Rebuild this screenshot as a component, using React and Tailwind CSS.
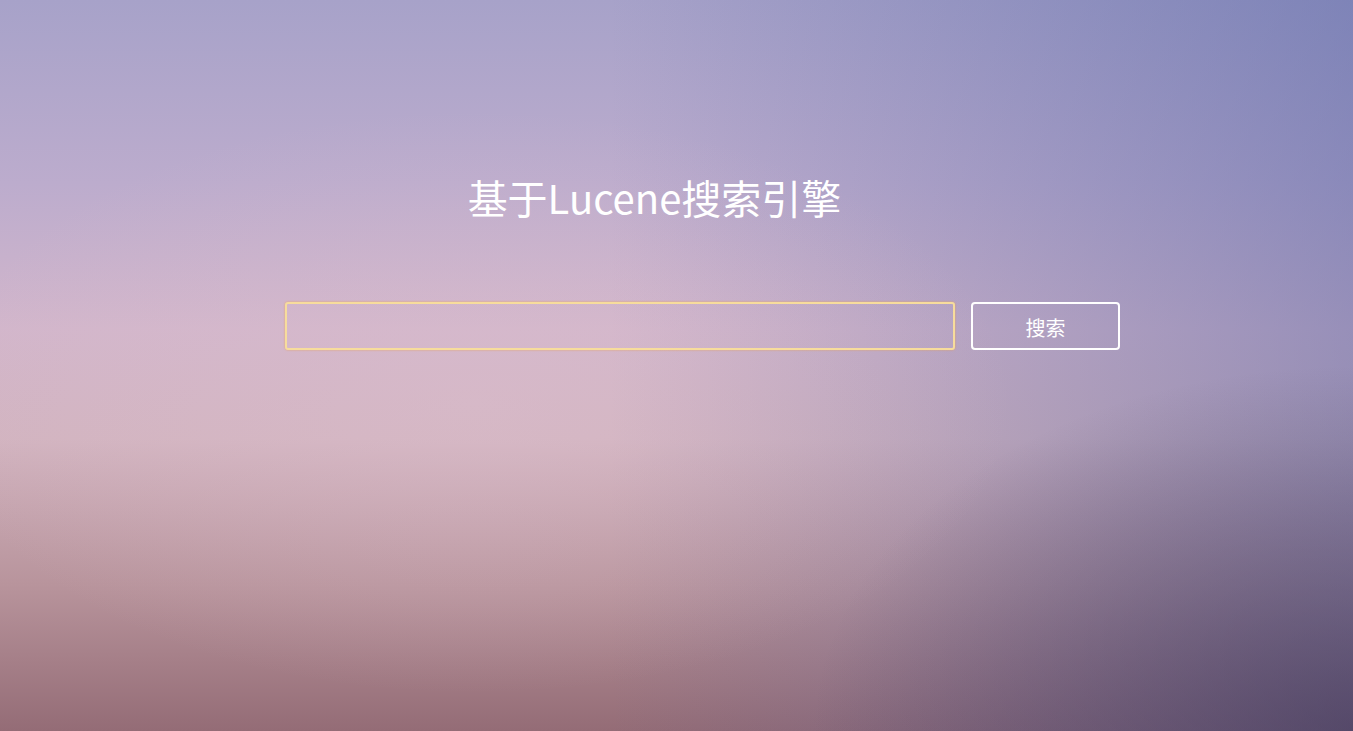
import { useState } from 'react';

export default function App() {
  const [query, setQuery] = useState('');

  return (
    <div
      className="relative h-[731px] w-full overflow-hidden bg-[linear-gradient(180deg,#a7a2c9_0%,#bcaccd_25%,#d2b6cb_45%,#d2b4c0_60%,#b8949c_80%,#946c76_100%)]"
      style={{ fontFamily: '"Noto Sans CJK SC", "Noto Sans", "Liberation Sans", sans-serif' }}
    >
      {/* soft colour washes over the base gradient */}
      <div className="pointer-events-none absolute inset-0 bg-[linear-gradient(90deg,rgba(70,90,160,0)_45%,rgba(70,90,160,0.42)_100%)]" />
      <div className="pointer-events-none absolute inset-0 bg-[radial-gradient(ellipse_40%_50%_at_100%_100%,rgba(60,50,80,0.55)_0%,rgba(60,50,80,0)_100%)]" />
      <div className="pointer-events-none absolute inset-0 bg-[radial-gradient(ellipse_40%_40%_at_35%_55%,rgba(220,190,205,0.4)_0%,rgba(220,190,205,0)_100%)]" />

      <div className="relative flex flex-col">
        <div className="flex justify-center pt-[167px] pr-[44px]">
          <h1 className="text-[40px] font-normal leading-[60px] text-white">基于Lucene搜索引擎</h1>
        </div>

        <div className="mt-[75px] flex items-center gap-[16px] pl-[285px]">
          <input
            type="text"
            value={query}
            onChange={(e) => setQuery(e.target.value)}
            className="h-[48px] w-[670px] rounded-[3px] border-2 border-[#f7dc9c] bg-transparent px-3 text-lg text-white shadow-[0_0_2px_#e9a25a] outline-none"
          />
          <button
            type="button"
            className="h-[48px] w-[149px] rounded-[4px] border-2 border-white bg-transparent pt-[4px] text-[20px] text-white"
          >
            搜索
          </button>
        </div>
      </div>
    </div>
  );
}
